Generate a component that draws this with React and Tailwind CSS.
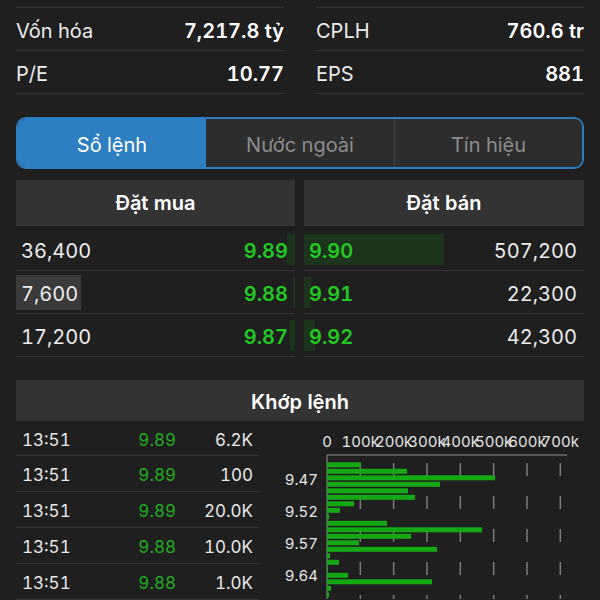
import React from "react";

const stats = [
  [
    ["Vốn hóa", "7,217.8 tỷ"],
    ["P/E", "10.77"],
  ],
  [
    ["CPLH", "760.6 tr"],
    ["EPS", "881"],
  ],
];

const bids = [
  { vol: "36,400", price: "9.89", bar: 8 },
  { vol: "7,600", price: "9.88", bar: 2, flash: true },
  { vol: "17,200", price: "9.87", bar: 5 },
];

const asks = [
  { price: "9.90", vol: "507,200", bar: 140 },
  { price: "9.91", vol: "22,300", bar: 7 },
  { price: "9.92", vol: "42,300", bar: 11 },
];

const trades = [
  ["13:51", "9.89", "6.2K"],
  ["13:51", "9.89", "100"],
  ["13:51", "9.89", "20.0K"],
  ["13:51", "9.88", "10.0K"],
  ["13:51", "9.88", "1.0K"],
];

const volBars = [34, 80, 168, 113, 81, 88, 27, 13, 2, 60, 155, 84, 32, 110, 3, 12, 1, 21, 105, 4, 2];
const xLabels = ["0", "100k", "200k", "300k", "400k", "500k", "600k", "700k"];
const yLabels = [
  ["9.47", 59],
  ["9.52", 91],
  ["9.57", 123],
  ["9.64", 155],
];

function VolumeChart() {
  const ox = 68;
  const step = 33.33;
  return (
    <svg width="325" height="178" className="block">
      {xLabels.map((l, i) => (
        <text key={l} x={ox + step * i} y="26" fontSize="15" fill="#e6e6e6" textAnchor="middle">
          {l}
        </text>
      ))}
      {xLabels.slice(1).map((l, i) => (
        <line
          key={l}
          x1={ox + step * (i + 1)}
          x2={ox + step * (i + 1)}
          y1="34"
          y2="178"
          stroke="#7c7c7c"
          strokeWidth="1.5"
          strokeDasharray="13 20"
          strokeDashoffset="-8"
        />
      ))}
      <line x1={ox} x2="308" y1="34" y2="34" stroke="#6e6e6e" strokeWidth="1.5" />
      <line x1={ox} x2={ox} y1="34" y2="178" stroke="#6e6e6e" strokeWidth="1.5" />
      {volBars.map((w, i) => (
        <rect key={i} x={ox} y={41.3 + 6.5 * i} width={w} height="5" fill="#14a814" />
      ))}
      {yLabels.map(([l, y]) => (
        <text key={l} x="59" y={y + 5} fontSize="15" fill="#e6e6e6" textAnchor="end">
          {l}
        </text>
      ))}
    </svg>
  );
}

export default function App() {
  return (
    <div className="w-[600px] h-[600px] overflow-hidden bg-[#1f1f1f] px-4 pt-[7px] text-white font-['Inter','Liberation_Sans',sans-serif] tabular-nums">
      {/* Stats */}
      <div className="grid grid-cols-2 gap-x-8">
        {stats.map((col, ci) => (
          <div key={ci} className="border-t border-[#343434]">
            {col.map(([label, value]) => (
              <div key={label} className="h-[43px] pt-[3px] border-b border-[#343434] flex items-center justify-between text-[20px]">
                <span className="text-[#ececec]">{label}</span>
                <span className="font-semibold">{value}</span>
              </div>
            ))}
          </div>
        ))}
      </div>

      {/* Tabs */}
      <div className="mt-[23px] h-[52px] grid grid-cols-3 rounded-[10px] border-2 border-[#2e7dbf] overflow-hidden text-[20px]">
        <div className="bg-[#2e7fc1] pt-[3px] flex items-center justify-center text-white">Sổ lệnh</div>
        <div className="bg-[#2d2d2d] pt-[3px] flex items-center justify-center text-[#8c8c8c]">Nước ngoài</div>
        <div className="bg-[#2d2d2d] pt-[3px] border-l border-[#454545] flex items-center justify-center text-[#8c8c8c]">Tín hiệu</div>
      </div>

      {/* Order book */}
      <div className="mt-[11px] grid grid-cols-[279px_280px] gap-[9px]">
        <div>
          <div className="h-[46px] bg-[#333333] flex items-center justify-center text-[20px] font-semibold">Đặt mua</div>
          <div className="mt-[2px]">
            {bids.map((b) => (
              <div key={b.price} className="relative h-[43px] pt-[4px] border-b border-[#353535] flex items-center justify-between pl-[5px] pr-[7px] text-[20px]">
                {b.flash && <div className="absolute left-0 top-[4px] bottom-[3px] w-[65px] bg-[#3a3a3a]" />}
                <div className="absolute right-0 top-[6px] bottom-[5px] bg-[#1c331c]" style={{ width: b.bar }} />
                <span className="relative text-[#ededed]">{b.vol}</span>
                <span className="relative text-[#22c922] font-semibold">{b.price}</span>
              </div>
            ))}
          </div>
        </div>
        <div>
          <div className="h-[46px] bg-[#333333] flex items-center justify-center text-[20px] font-semibold">Đặt bán</div>
          <div className="mt-[2px]">
            {asks.map((a) => (
              <div key={a.price} className="relative h-[43px] pt-[4px] border-b border-[#353535] flex items-center justify-between pl-[5px] pr-[7px] text-[20px]">
                <div className="absolute left-0 top-[6px] bottom-[5px] bg-[#1c331c]" style={{ width: a.bar }} />
                <span className="relative text-[#22c922] font-semibold">{a.price}</span>
                <span className="relative text-[#ededed]">{a.vol}</span>
              </div>
            ))}
          </div>
        </div>
      </div>

      {/* Matched orders */}
      <div className="mt-[23px] h-[41px] pt-[2px] bg-[#333333] flex items-center justify-center text-[20px] font-semibold">Khớp lệnh</div>
      <div className="flex">
        <div className="w-[243px]">
          {trades.map(([t, p, v], i) => (
            <div
              key={i}
              className={`${i === 0 ? "h-[35px]" : "h-[36px]"} pt-[5px] border-b border-[#353535] grid grid-cols-[1fr_70px_77px] items-center pl-[6px] pr-[6px] text-[17px]`}
            >
              <span className="text-[#e8e8e8]">{t}</span>
              <span className="text-right text-[#22a922]">{p}</span>
              <span className="text-right text-[#e8e8e8]">{v}</span>
            </div>
          ))}
        </div>
        <VolumeChart />
      </div>
    </div>
  );
}
